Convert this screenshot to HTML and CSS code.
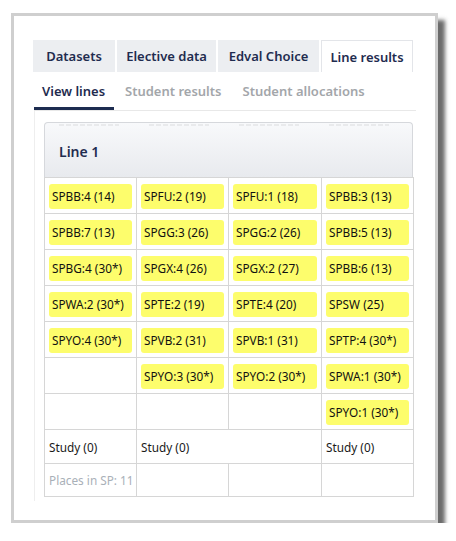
FILE: index.html
```html
<!DOCTYPE html>
<html>
<head>
<meta charset="utf-8">
<link rel="stylesheet" href="styles.css">
</head>
<body>
<div class="frame">
  <div class="tabs">
    <div class="tab t1">Datasets</div>
    <div class="tab t2">Elective data</div>
    <div class="tab t3">Edval Choice</div>
    <div class="tab t4 active">Line results</div>
  </div>
  <div class="subtabs">
    <div class="subtab active">View lines</div>
    <div class="subtab">Student results</div>
    <div class="subtab">Student allocations</div>
  </div>
  <div class="content">
    <div class="card">
      <div class="head">
        <div class="ghost"><i></i><i></i><i></i><i></i></div>
        <div class="title">Line 1</div>
      </div>
      <table class="grid">
        <colgroup><col class="c1"><col class="c2"><col class="c3"><col class="c4"></colgroup>
        <tr><td><span class="pill">SPBB:4 (14)</span></td><td><span class="pill">SPFU:2 (19)</span></td><td><span class="pill">SPFU:1 (18)</span></td><td><span class="pill">SPBB:3 (13)</span></td></tr>
        <tr><td><span class="pill">SPBB:7 (13)</span></td><td><span class="pill">SPGG:3 (26)</span></td><td><span class="pill">SPGG:2 (26)</span></td><td><span class="pill">SPBB:5 (13)</span></td></tr>
        <tr><td><span class="pill">SPBG:4 (30*)</span></td><td><span class="pill">SPGX:4 (26)</span></td><td><span class="pill">SPGX:2 (27)</span></td><td><span class="pill">SPBB:6 (13)</span></td></tr>
        <tr><td><span class="pill">SPWA:2 (30*)</span></td><td><span class="pill">SPTE:2 (19)</span></td><td><span class="pill">SPTE:4 (20)</span></td><td><span class="pill">SPSW (25)</span></td></tr>
        <tr><td><span class="pill">SPYO:4 (30*)</span></td><td><span class="pill">SPVB:2 (31)</span></td><td><span class="pill">SPVB:1 (31)</span></td><td><span class="pill">SPTP:4 (30*)</span></td></tr>
        <tr><td></td><td><span class="pill">SPYO:3 (30*)</span></td><td><span class="pill">SPYO:2 (30*)</span></td><td><span class="pill">SPWA:1 (30*)</span></td></tr>
        <tr><td></td><td></td><td></td><td><span class="pill">SPYO:1 (30*)</span></td></tr>
        <tr class="txt"><td>Study (0)</td><td colspan="2">Study (0)</td><td>Study (0)</td></tr>
        <tr class="txt last"><td class="muted">Places in SP: 11</td><td></td><td></td><td></td></tr>
      </table>
    </div>
  </div>
</div>
</body>
</html>
```

FILE: styles.css
```css
html, body {
  margin: 0;
  padding: 0;
  background: #ffffff;
}
body {
  font-family: "Noto Sans", "Open Sans", sans-serif;
  color: #1a1a1a;
}
.frame {
  box-sizing: border-box;
  margin: 13px 0 0 11px;
  width: 427px;
  height: 510px;
  border: 3px solid #cfcfcf;
  background: #ffffff;
  box-shadow: 7px 7px 4px rgba(70, 70, 70, 0.8);
  padding: 24px 19px 0 19px;
}
.tabs {
  display: flex;
  gap: 2px;
  height: 32px;
}
.tab {
  box-sizing: border-box;
  display: flex;
  align-items: center;
  justify-content: center;
  background: #eceef1;
  color: #1f2c4f;
  font-weight: 600;
  font-size: 13px;
  white-space: nowrap;
}
.t1 { width: 82px; }
.t2 { width: 99px; }
.t3 { width: 101px; }
.t4 { width: 92px; }
.tab.active {
  background: #ffffff;
  border: 1px solid #e3e5e9;
  border-bottom: none;
}
.subtabs {
  display: flex;
  height: 38px;
  border-bottom: 1px solid #e8e8e8;
  margin-left: 1px;
}
.subtab {
  box-sizing: border-box;
  display: flex;
  align-items: center;
  padding: 0 10px;
  margin-left: 1px;
  font-weight: 600;
  font-size: 13px;
  color: #a3a6aa;
  white-space: nowrap;
}
.subtab.active {
  flex: none;
  margin-left: 0;
  color: #1f2c4f;
  padding: 3px 0 0 8px;
  width: 80px;
  border-bottom: 3px solid #1d2c50;
}
.content {
  border-left: 1px solid #eeeeee;
  margin-left: 1px;
  padding: 11px 0 0 9px;
  height: 390px;
  box-sizing: border-box;
}
.card {
  width: 369px;
}
.head {
  box-sizing: border-box;
  height: 55px;
  border: 1px solid #d6d8dc;
  border-bottom: none;
  border-radius: 4px 4px 0 0;
  background: linear-gradient(#f8f9fb, #e8eaee);
  overflow: hidden;
}
.ghost {
  display: flex;
  height: 3px;
  padding-top: 1px;
}
.ghost i {
  display: block;
  width: 60px;
  margin: 0 16px 0 14px;
  height: 2px;
  background: repeating-linear-gradient(90deg, #e9eaec 0 5px, transparent 5px 7px);
}
.title {
  padding: 15px 0 0 14px;
  font-weight: 600;
  font-size: 14px;
  color: #1f2c4f;
}
.grid {
  border-collapse: collapse;
  width: 369px;
  table-layout: fixed;
  font-size: 11.8px;
}
.c1 { width: 92px; }
.c2 { width: 92px; }
.c3 { width: 93px; }
.c4 { width: 92px; }
.grid td {
  border: 1px solid #d6d6d6;
  padding: 6px 4px 4px 4px;
  height: 25px;
  vertical-align: middle;
  white-space: nowrap;
}
.pill {
  display: block;
  height: 25px;
  line-height: 25px;
  background: #fdfd6c;
  border-radius: 3px;
  padding-left: 3px;
  white-space: nowrap;
  color: #111111;
}
.grid tr.txt td {
  height: 23px;
  padding: 5px 4px 5px 4px;
}
.grid tr.last td {
  height: 22px;
}
.muted {
  color: #a9b0b8;
}
```
